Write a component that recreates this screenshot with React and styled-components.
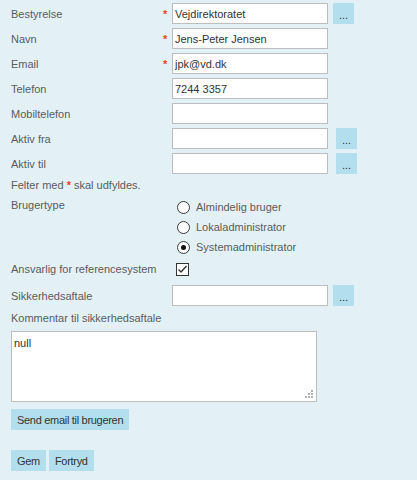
import React from 'react';
import styled, { createGlobalStyle } from 'styled-components';

const GlobalStyle = createGlobalStyle`
  html, body {
    margin: 0;
    padding: 0;
    background: #e3f1f7;
  }
  body {
    font-family: "Liberation Sans", Arial, sans-serif;
    font-size: 11px;
    color: #555;
  }
`;

const Page = styled.div`
  width: 417px;
  min-height: 480px;
  box-sizing: border-box;
  padding: 3px 0 0 11px;
  background: #e3f1f7;
`;

const Row = styled.div`
  display: grid;
  grid-template-columns: 152px 9px 156px auto;
  align-items: center;
  height: 21px;
  margin-top: ${p => p.$top || 0}px;
  margin-bottom: 4px;
`;

const Label = styled.label`
  color: #5b5b5b;
  font-size: 11px;
  line-height: 14px;
`;

const Star = styled.span`
  color: #e8431c;
  font-weight: bold;
  font-size: 11px;
  line-height: 14px;
`;

const Input = styled.input`
  box-sizing: border-box;
  width: 156px;
  height: 21px;
  border: 1px solid #bdbdbd;
  background: #fff;
  padding: 0 2px;
  font-family: "Liberation Sans", Arial, sans-serif;
  font-size: 11px;
  color: #333;
  outline: none;
`;

const DotsButton = styled.button`
  box-sizing: border-box;
  width: 21px;
  height: 21px;
  margin-left: ${p => p.$shift || 5}px;
  border: none;
  background: #b3deed;
  color: #333;
  font-family: "Liberation Sans", Arial, sans-serif;
  font-size: 11px;
  padding: 3px 0 0;
  line-height: 14px;
  cursor: pointer;
`;

const Note = styled.div`
  margin-top: 1px;
  line-height: 14px;
  color: #5b5b5b;
`;

const TypeSection = styled.div`
  display: grid;
  grid-template-columns: 166px auto;
  margin-top: 5px;
`;

const TopLabel = styled(Label)`
  line-height: 16px;
`;

const RadioList = styled.div`
  display: flex;
  flex-direction: column;
`;

const RadioRow = styled.div`
  display: flex;
  align-items: center;
  height: 20px;
  gap: 6px;
  color: #5b5b5b;
`;

const RadioCircle = styled.span`
  box-sizing: border-box;
  width: 13px;
  height: 13px;
  border-radius: 50%;
  border: 1px solid #3a3a3a;
  background: #fff;
  display: flex;
  align-items: center;
  justify-content: center;
  &::after {
    content: '';
    width: 5px;
    height: 5px;
    border-radius: 50%;
    background: ${p => (p.$checked ? '#111' : 'transparent')};
  }
`;

const CheckRow = styled.div`
  display: grid;
  grid-template-columns: 165px auto;
  align-items: center;
  height: 20px;
  margin-top: 2px;
`;

const CheckBox = styled.span`
  box-sizing: border-box;
  width: 13px;
  height: 13px;
  border: 1px solid #333;
  background: #fff;
  display: flex;
  align-items: center;
  justify-content: center;
`;

const BlockLabel = styled.div`
  margin-top: 5px;
  line-height: 14px;
  color: #5b5b5b;
`;

const AreaWrap = styled.div`
  position: relative;
  box-sizing: border-box;
  width: 306px;
  height: 71px;
  margin-top: 6px;
  border: 1px solid #bdbdbd;
  background: #fff;
`;

const Area = styled.textarea`
  box-sizing: border-box;
  width: 100%;
  height: 100%;
  border: none;
  resize: none;
  outline: none;
  padding: 5px 2px;
  font-family: "Liberation Sans", Arial, sans-serif;
  font-size: 11px;
  color: #333;
  background: transparent;
`;

const Grip = styled.svg`
  position: absolute;
  right: 2px;
  bottom: 2px;
`;

const Button = styled.button`
  box-sizing: border-box;
  height: 21px;
  border: none;
  background: #b3deed;
  color: #333;
  font-family: "Liberation Sans", Arial, sans-serif;
  font-size: 11px;
  letter-spacing: -0.3px;
  padding: 0 6px;
  cursor: pointer;
`;

const SendRow = styled.div`
  margin-top: 7px;
`;

const Actions = styled.div`
  display: flex;
  gap: 3px;
  margin-top: 20px;
`;

const fields = [
  { label: 'Bestyrelse', value: 'Vejdirektoratet', req: true, dots: 5 },
  { label: 'Navn', value: 'Jens-Peter Jensen', req: true },
  { label: 'Email', value: 'jpk@vd.dk', req: true },
  { label: 'Telefon', value: '7244 3357' },
  { label: 'Mobiltelefon', value: '' },
  { label: 'Aktiv fra', value: '', dots: 8 },
  { label: 'Aktiv til', value: '', dots: 8 },
];

const radios = [
  { label: 'Almindelig bruger', checked: false },
  { label: 'Lokaladministrator', checked: false },
  { label: 'Systemadministrator', checked: true },
];

export default function App() {
  return (
    <Page>
      <GlobalStyle />
      {fields.map(f => (
        <Row key={f.label}>
          <Label>{f.label}</Label>
          <Star>{f.req ? '*' : ''}</Star>
          <Input defaultValue={f.value} />
          {f.dots ? <DotsButton $shift={f.dots}>...</DotsButton> : <span />}
        </Row>
      ))}
      <Note>
        Felter med <Star>*</Star> skal udfyldes.
      </Note>
      <TypeSection>
        <TopLabel>Brugertype</TopLabel>
        <RadioList>
          {radios.map(r => (
            <RadioRow key={r.label}>
              <RadioCircle $checked={r.checked} />
              {r.label}
            </RadioRow>
          ))}
        </RadioList>
      </TypeSection>
      <CheckRow>
        <Label>Ansvarlig for referencesystem</Label>
        <CheckBox>
          <svg width="11" height="11" viewBox="0 0 11 11">
            <path d="M1.5 5.5 L4 8 L9.5 2" fill="none" stroke="#333" strokeWidth="1.4" />
          </svg>
        </CheckBox>
      </CheckRow>
      <Row $top={6}>
        <Label>Sikkerhedsaftale</Label>
        <Star />
        <Input defaultValue="" />
        <DotsButton $shift={5}>...</DotsButton>
      </Row>
      <BlockLabel>Kommentar til sikkerhedsaftale</BlockLabel>
      <AreaWrap>
        <Area defaultValue="null" />
        <Grip width="9" height="9" viewBox="0 0 9 9">
          <g fill="#b0b0b0">
            <rect x="6" y="0" width="2" height="2" />
            <rect x="3" y="3" width="2" height="2" />
            <rect x="6" y="3" width="2" height="2" />
            <rect x="0" y="6" width="2" height="2" />
            <rect x="3" y="6" width="2" height="2" />
            <rect x="6" y="6" width="2" height="2" />
          </g>
        </Grip>
      </AreaWrap>
      <SendRow>
        <Button>Send email til brugeren</Button>
      </SendRow>
      <Actions>
        <Button>Gem</Button>
        <Button>Fortryd</Button>
      </Actions>
    </Page>
  );
}
